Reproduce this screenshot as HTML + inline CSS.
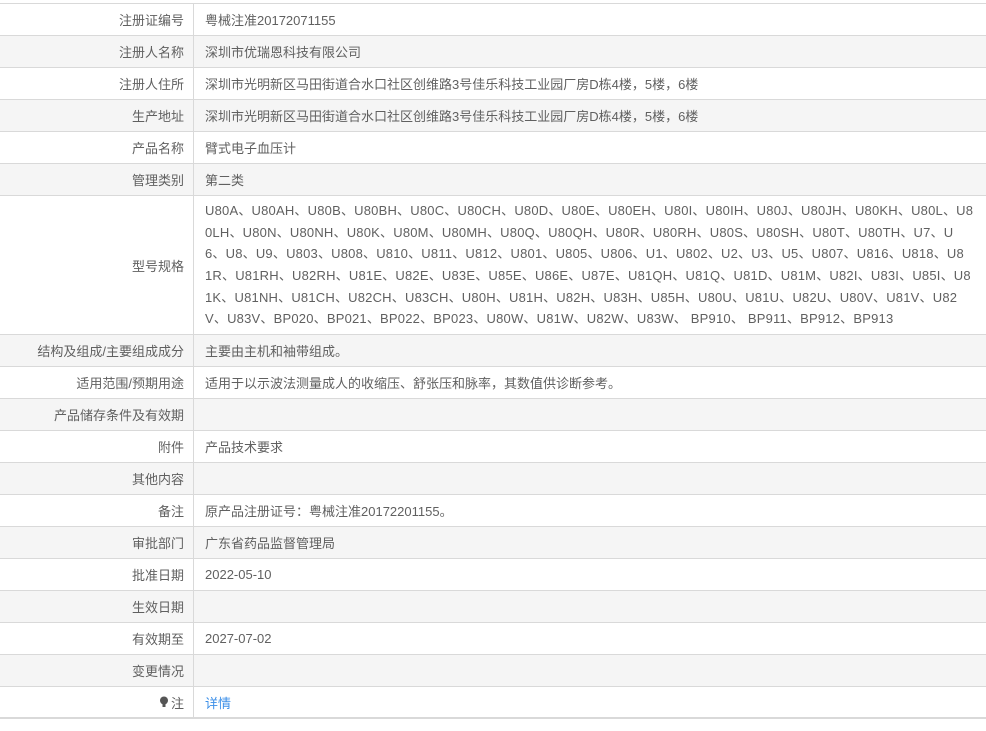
<!DOCTYPE html>
<html><head><meta charset="utf-8"><style>
html,body{margin:0;padding:0;background:#fff;width:986px;height:731px;overflow:hidden}
body{font-family:"Liberation Sans","Noto Sans CJK SC",sans-serif;font-size:13px;color:#606060}
.r{position:absolute;left:0;width:986px;border-top:1px solid #d9d9d9;box-sizing:border-box}
.g{background:#f5f5f5}
.l{position:absolute;left:0;top:0;bottom:0;width:194px;border-right:1px solid #d9d9d9;text-align:right;padding-right:9px;box-sizing:border-box;display:flex;align-items:center;justify-content:flex-end}
.v{position:absolute;left:205px;top:0;bottom:0;display:flex;align-items:center;white-space:nowrap}
.m{line-height:21.6px;letter-spacing:0.2px}
a{color:#3c8fe8;text-decoration:none}
</style></head><body>
<div class="r" style="top:3px;height:32px"><div class="l">注册证编号</div><div class="v">粤械注准20172071155</div></div>
<div class="r g" style="top:35px;height:32px"><div class="l">注册人名称</div><div class="v">深圳市优瑞恩科技有限公司</div></div>
<div class="r" style="top:67px;height:32px"><div class="l">注册人住所</div><div class="v">深圳市光明新区马田街道合水口社区创维路3号佳乐科技工业园厂房D栋4楼，5楼，6楼</div></div>
<div class="r g" style="top:99px;height:32px"><div class="l">生产地址</div><div class="v">深圳市光明新区马田街道合水口社区创维路3号佳乐科技工业园厂房D栋4楼，5楼，6楼</div></div>
<div class="r" style="top:131px;height:32px"><div class="l">产品名称</div><div class="v">臂式电子血压计</div></div>
<div class="r g" style="top:163px;height:32px"><div class="l">管理类别</div><div class="v">第二类</div></div>
<div class="r" style="top:195px;height:139px"><div class="l">型号规格</div><div class="v m">U80A、U80AH、U80B、U80BH、U80C、U80CH、U80D、U80E、U80EH、U80I、U80IH、U80J、U80JH、U80KH、U80L、U8<br>0LH、U80N、U80NH、U80K、U80M、U80MH、U80Q、U80QH、U80R、U80RH、U80S、U80SH、U80T、U80TH、U7、U<br>6、U8、U9、U803、U808、U810、U811、U812、U801、U805、U806、U1、U802、U2、U3、U5、U807、U816、U818、U8<br>1R、U81RH、U82RH、U81E、U82E、U83E、U85E、U86E、U87E、U81QH、U81Q、U81D、U81M、U82I、U83I、U85I、U8<br>1K、U81NH、U81CH、U82CH、U83CH、U80H、U81H、U82H、U83H、U85H、U80U、U81U、U82U、U80V、U81V、U82<br>V、U83V、BP020、BP021、BP022、BP023、U80W、U81W、U82W、U83W、 BP910、 BP911、BP912、BP913</div></div>
<div class="r g" style="top:334px;height:32px"><div class="l">结构及组成/主要组成成分</div><div class="v">主要由主机和袖带组成。</div></div>
<div class="r" style="top:366px;height:32px"><div class="l">适用范围/预期用途</div><div class="v">适用于以示波法测量成人的收缩压、舒张压和脉率，其数值供诊断参考。</div></div>
<div class="r g" style="top:398px;height:32px"><div class="l">产品储存条件及有效期</div><div class="v"></div></div>
<div class="r" style="top:430px;height:32px"><div class="l">附件</div><div class="v">产品技术要求</div></div>
<div class="r g" style="top:462px;height:32px"><div class="l">其他内容</div><div class="v"></div></div>
<div class="r" style="top:494px;height:32px"><div class="l">备注</div><div class="v">原产品注册证号：粤械注准20172201155。</div></div>
<div class="r g" style="top:526px;height:32px"><div class="l">审批部门</div><div class="v">广东省药品监督管理局</div></div>
<div class="r" style="top:558px;height:32px"><div class="l">批准日期</div><div class="v">2022-05-10</div></div>
<div class="r g" style="top:590px;height:32px"><div class="l">生效日期</div><div class="v"></div></div>
<div class="r" style="top:622px;height:32px"><div class="l">有效期至</div><div class="v">2027-07-02</div></div>
<div class="r g" style="top:654px;height:32px"><div class="l">变更情况</div><div class="v"></div></div>
<div class="r" style="top:686px;height:33px;border-bottom:2px solid #d9d9d9"><div class="l"><svg width="10" height="12" viewBox="0 0 10 12" style="margin-right:2px"><circle cx="5" cy="4.5" r="4" fill="#555"/><rect x="3.5" y="8" width="3" height="3" fill="#555"/></svg>注</div><div class="v"><a>详情</a></div></div>
</body></html>
